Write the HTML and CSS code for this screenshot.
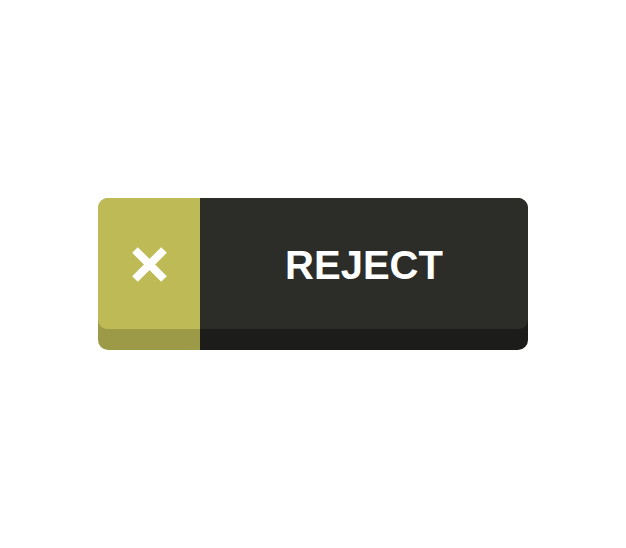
FILE: index.html
```html
<!DOCTYPE html>
<html lang="en">
<head>
  <meta charset="UTF-8" />
  <title>Reject</title>
  <link rel="stylesheet" href="styles.css">
</head>
<body>
  <button class="reject-btn" type="button">
    <span class="part part-icon">
      <span class="face">
        <svg class="x-icon" viewBox="0 0 35 35" width="35" height="35" aria-hidden="true">
          <path d="M3 3 L32 32 M32 3 L3 32" stroke="#fff" stroke-width="8" fill="none" />
        </svg>
      </span>
    </span>
    <span class="part part-label">
      <span class="face">REJECT</span>
    </span>
  </button>
</body>
</html>
```

FILE: styles.css
```css
* { box-sizing: border-box; }

html, body {
  height: 100%;
}

body {
  margin: 0;
  background: #fff;
  font-family: 'Liberation Sans', Arial, sans-serif;
  display: flex;
  align-items: center;
  justify-content: center;
}

.reject-btn {
  display: flex;
  width: 430px;
  height: 152px;
  padding: 0;
  border: none;
  border-radius: 10px;
  overflow: hidden;
  cursor: pointer;
  background: none;
  font: inherit;
}

/* each part = raised face over a darker base */
.part {
  display: flex;
  flex-direction: column;
  padding-bottom: 21px;
}

.part-icon {
  width: 102px;
  background: #9d9a47;
}

.part-label {
  flex: 1;
  background: #1c1d1a;
}

.face {
  flex: 1;
  display: flex;
  align-items: center;
  justify-content: center;
}

.part-icon .face {
  background: #bebb56;
  border-bottom-left-radius: 9px;
}

.part-label .face {
  background: #2c2d29;
  border-bottom-right-radius: 9px;
  color: #fff;
  font-weight: bold;
  font-size: 40px;
  padding-top: 4px;
}

.x-icon {
  display: block;
  margin-top: 2px;
}
```
